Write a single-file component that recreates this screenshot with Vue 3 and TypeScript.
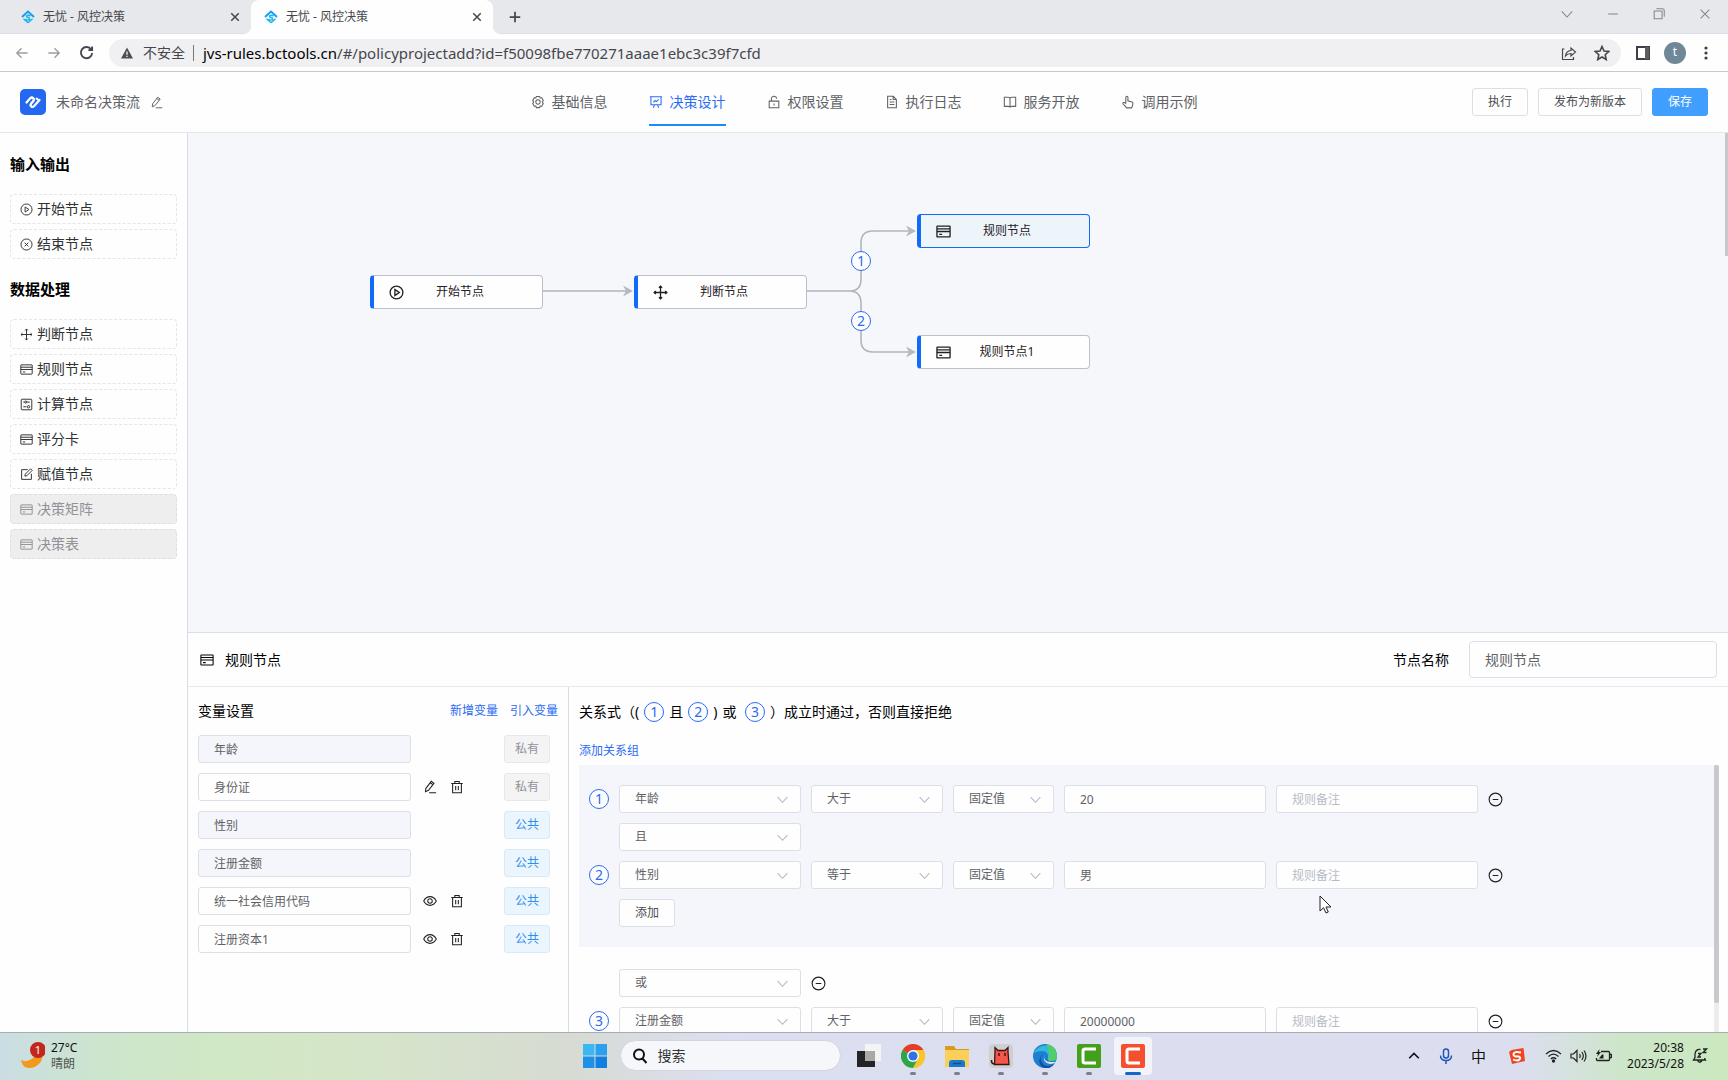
<script setup lang="ts">
import { h, ref } from 'vue'

type IconProps = { name: string; size?: number; weight?: number }

const paths: Record<string, string> = {
  gear: 'M6.2 1.6h3.6l.7 1.7 1.8-.2 1.8 3.1L13 7.7v.6l1.1 1.5-1.8 3.1-1.8-.2-.7 1.7H6.2l-.7-1.7-1.8.2-1.8-3.1L3 8.3v-.6L1.9 6.2l1.8-3.1 1.8.2zM8 5.500a2.500 2.500 0 1 0 0 5 2.500 2.500 0 0 0 0-5z',
  board: 'M1 2h14M2.200 2v9.200h11.600V2M5 14.800l1.200-3.500M11 14.800l-1.200-3.500M5 8.300l2-2 1.500 1.300L11 5',
  lock: 'M2.500 7h11v7.500h-11zM5 7V4.500a3 3 0 0 1 6-.2M8 9.700v2.300',
  doc: 'M3 1.500h6.500L13 5v9.500H3zM9.300 1.700v3.500h3.500M5.300 8h5.400M5.300 10.800h5.400M5.300 5.200h2',
  book: 'M1.500 2.500h4.500q2 0 2 1.500 0-1.500 2-1.500h4.500v10.500H10q-2 0-2 1.200 0-1.200-2-1.200H1.500zM8 4v10',
  hand: 'M5.500 9.800V2.700a1.200 1.200 0 0 1 2.400 0v4l4.600 1.200q1.300.4 1.100 1.800l-.6 3.300-1 1.700H6.500L2.300 10q-.5-1.200.7-1.500 1-.2 2.500 1.300',
  pencil: 'M3.300 9.500l6.200-8 3 2.200-6.200 8-3.500 1.600zM8.300 3.100l3 2.200M7 14.500h8',
  play: 'M8 1.200a6.800 6.800 0 1 0 0 13.600A6.800 6.800 0 0 0 8 1.200zM6.300 4.900v6.200L11 8z',
  stop: 'M8 1.200a6.800 6.800 0 1 0 0 13.600A6.800 6.800 0 0 0 8 1.200zM5.700 5.700l4.600 4.600M10.300 5.700l-4.600 4.600',
  move: 'M8 1.200v13.600M1.200 8h13.600M6.300 3L8 1.200 9.700 3M6.300 13L8 14.800 9.700 13M3 6.300L1.200 8 3 9.700M13 6.300L14.800 8 13 9.700',
  card: 'M1.500 2.300h13q.5 0 .5.5v10.400q0 .5-.5.5h-13q-.5 0-.5-.5V2.800q0-.5.5-.5zM1 5.200h14M1 8h14M3.500 11h3',
  calc: 'M2.500 1.500h11q1 0 1 1v11q0 1-1 1h-11q-1 0-1-1v-11q0-1 1-1zM4 5h1.500M7 3.700a1.300 1.300 0 1 0 0 2.600 1.300 1.300 0 0 0 0-2.600zM8.500 5H12M4 10.800h4M10.500 9.300a1.500 1.500 0 1 0 0 3 1.500 1.500 0 0 0 0-3z',
  assign: 'M9.500 2H2v12h12V7M6 10l.5-2.500L13 1l2 2-6.500 6.500z',
  trash: 'M1.500 4h13M5.500 4V1.700h5V4M3 4v10.500h10V4M6.500 6.800v5M9.500 6.800v5',
  eye: 'M.8 8Q3.500 3 8 3t7.200 5Q12.500 13 8 13T.8 8zM8 5.400a2.600 2.600 0 1 0 0 5.200 2.600 2.600 0 0 0 0-5.200z',
  minus: 'M8 1.200a6.800 6.800 0 1 0 0 13.600A6.800 6.800 0 0 0 8 1.200zM5 8h6',
  down: 'M2 5l6 6.500L14 5',
  up: 'M2.500 10.500L8 5l5.500 5.500',
  close: 'M3 3l10 10M13 3L3 13',
  plus: 'M8 2v12M2 8h12',
  dash: 'M2.500 8h11',
  restore: 'M2.500 4.500h9v9h-9zM5 2h7q2 0 2 2v7',
  back: 'M14.500 8H2M7.500 2.500L2 8l5.500 5.500',
  forward: 'M1.500 8H14M8.500 2.500L14 8l-5.500 5.500',
  reload: 'M13 4.800A6 6 0 1 0 14 8.500M14 1.500v4h-4',
  share: 'M3.500 4H1.500v10.500h11V12M4.500 11q.5-5 5.500-5.500V3l4.500 4-4.500 4V8.500q-3.500 0-5.500 2.500z',
  star: 'M8 1.500l2 4.500 4.700.5-3.500 3.200 1 4.800L8 12l-4.200 2.500 1-4.800L1.300 6.500 6 6z',
  search: 'M7 1.500a5 5 0 1 0 0 10 5 5 0 0 0 0-10zM10.500 10.500l4 4.500',
}

const Icon = (p: IconProps) =>
  h('svg', { width: p.size ?? 14, height: p.size ?? 14, viewBox: '0 0 16 16', fill: 'none', stroke: 'currentColor', 'stroke-width': p.weight ?? 1.2, 'aria-hidden': 'true' }, [
    h('path', { d: paths[p.name] }),
  ])
Icon.props = ['name', 'size', 'weight']

const browserTabs = [
  { title: '无忧 - 风控决策', active: false },
  { title: '无忧 - 风控决策', active: true },
]

const nav = [
  { icon: 'gear', label: '基础信息' },
  { icon: 'board', label: '决策设计', active: true },
  { icon: 'lock', label: '权限设置' },
  { icon: 'doc', label: '执行日志' },
  { icon: 'book', label: '服务开放' },
  { icon: 'hand', label: '调用示例' },
]

const palette = [
  { title: '输入输出', items: [{ icon: 'play', label: '开始节点' }, { icon: 'stop', label: '结束节点' }] },
  {
    title: '数据处理',
    items: [
      { icon: 'move', label: '判断节点' },
      { icon: 'card', label: '规则节点' },
      { icon: 'calc', label: '计算节点' },
      { icon: 'card', label: '评分卡' },
      { icon: 'assign', label: '赋值节点' },
      { icon: 'card', label: '决策矩阵', disabled: true },
      { icon: 'card', label: '决策表', disabled: true },
    ],
  },
]

const nodes = [
  { x: 182, y: 142, icon: 'play', label: '开始节点' },
  { x: 446, y: 142, icon: 'move', label: '判断节点' },
  { x: 729, y: 81, icon: 'card', label: '规则节点', selected: true },
  { x: 729, y: 202, icon: 'card', label: '规则节点1' },
]

const nodeName = ref('规则节点')

const variables = ref([
  { name: '年龄', locked: true, icons: [] as string[], shared: false },
  { name: '身份证', locked: false, icons: ['pencil', 'trash'], shared: false },
  { name: '性别', locked: true, icons: [], shared: true },
  { name: '注册金额', locked: true, icons: [], shared: true },
  { name: '统一社会信用代码', locked: false, icons: ['eye', 'trash'], shared: true },
  { name: '注册资本1', locked: false, icons: ['eye', 'trash'], shared: true },
])

type Row =
  | { kind: 'rule'; no: number; field: string; op: string; value: string }
  | { kind: 'join'; word: string; removable?: boolean }
  | { kind: 'add' }

const groups = ref<{ shaded: boolean; rows: Row[] }[]>([
  {
    shaded: true,
    rows: [
      { kind: 'rule', no: 1, field: '年龄', op: '大于', value: '20' },
      { kind: 'join', word: '且' },
      { kind: 'rule', no: 2, field: '性别', op: '等于', value: '男' },
      { kind: 'add' },
    ],
  },
  {
    shaded: false,
    rows: [
      { kind: 'join', word: '或', removable: true },
      { kind: 'rule', no: 3, field: '注册金额', op: '大于', value: '20000000' },
    ],
  },
])
</script>

<template>
  <div class="desktop">
    <div class="tabstrip">
      <div v-for="(t, i) in browserTabs" :key="i" class="tab" :class="{ active: t.active }">
        <svg width="14" height="14" viewBox="0 0 14 14" fill="none" stroke-width="2" aria-hidden="true">
          <path d="M1 7L7 1.500 13 7" stroke="#1d9bf0" />
          <path d="M9.500 6Q7 4.500 5.500 6q0 1.300 1.500 1.500 2 .3 1.500 2Q7 10.800 4.500 9M7 12.800L2.500 8.800M7 12.800l4.500-4" stroke="#19b5ee" stroke-width="1.500" />
        </svg>
        <span class="tab-title">{{ t.title }}</span>
        <button class="plain" aria-label="关闭标签页"><Icon name="close" :size="12" :weight="2" /></button>
      </div>
      <button class="plain new-tab" aria-label="新标签页"><Icon name="plus" :size="14" :weight="2" /></button>
      <div class="window-controls">
        <button class="plain" aria-label="搜索标签页"><Icon name="down" /></button>
        <button class="plain" aria-label="最小化"><Icon name="dash" /></button>
        <button class="plain" aria-label="还原"><Icon name="restore" /></button>
        <button class="plain" aria-label="关闭"><Icon name="close" /></button>
      </div>
    </div>

    <div class="toolbar">
      <button class="plain faded" aria-label="后退"><Icon name="back" :weight="1.500" /></button>
      <button class="plain faded" aria-label="前进"><Icon name="forward" :weight="1.500" /></button>
      <button class="plain" aria-label="重新加载"><Icon name="reload" :size="15" :weight="2" /></button>
      <div class="address">
        <svg width="12" height="12" viewBox="0 0 12 12" aria-hidden="true">
          <path d="M6 .5L12 11.500H0z" fill="#4b4e54" /><path d="M6 4.500v3.200M6 8.800V10" stroke="#fff" stroke-width="1.200" />
        </svg>
        <span class="insecure">不安全</span>
        <span class="url"><b>jvs-rules.bctools.cn</b>/#/policyprojectadd?id=f50098fbe770271aaae1ebc3c39f7cfd</span>
        <button class="plain" aria-label="分享"><Icon name="share" :size="16" /></button>
        <button class="plain" aria-label="收藏"><Icon name="star" :size="16" :weight="1.600" /></button>
      </div>
      <div class="browser-actions">
        <button class="plain" aria-label="侧边栏">
          <svg width="14" height="14" viewBox="0 0 14 14"><path d="M1 1h12v12H1z" fill="none" stroke="#3f4047" stroke-width="2" /><path d="M9 1h4v12H9z" fill="#5b5c64" /></svg>
        </button>
        <button class="avatar">t</button>
        <button class="plain" aria-label="菜单">
          <svg width="4" height="14" viewBox="0 0 4 14" fill="#3c4043"><circle cx="2" cy="2" r="1.600" /><circle cx="2" cy="7" r="1.600" /><circle cx="2" cy="12" r="1.600" /></svg>
        </button>
      </div>
    </div>

    <header class="app-header">
      <div class="project">
        <svg width="26" height="26" viewBox="0 0 26 26" fill="none" aria-hidden="true">
          <rect width="26" height="26" rx="5" fill="#2468f2" />
          <path d="M6.500 13.500l3.500-4q1.800-1.800 3.300-.3 1.200 1.300 0 2.800l-2.300 2.800q-1 1.500.3 2.700 1.400 1 2.900-.5l5.300-6" stroke="#fff" stroke-width="2.300" stroke-linecap="round" />
          <path d="M16.500 9.500l2.500 2" stroke="#fff" stroke-width="2" stroke-linecap="round" />
        </svg>
        <span>未命名决策流</span>
        <button class="plain" aria-label="重命名"><Icon name="pencil" :size="13" /></button>
      </div>
      <nav>
        <a v-for="n in nav" :key="n.label" href="#" :class="{ active: n.active }">
          <Icon :name="n.icon" :size="14" /><span>{{ n.label }}</span>
        </a>
      </nav>
      <div class="header-actions">
        <button class="btn">执行</button>
        <button class="btn">发布为新版本</button>
        <button class="btn primary">保存</button>
      </div>
    </header>

    <div class="workspace">
      <aside class="sidebar">
        <section v-for="g in palette" :key="g.title">
          <h3>{{ g.title }}</h3>
          <button v-for="it in g.items" :key="it.label" class="palette-item" :disabled="it.disabled">
            <Icon :name="it.icon" :size="13" /><span>{{ it.label }}</span>
          </button>
        </section>
      </aside>

      <main>
        <div class="canvas">
          <svg class="edges" width="920" height="300" viewBox="0 0 920 300" fill="none" stroke="#b0b5bf" stroke-width="1.600" aria-hidden="true">
            <path d="M355 158H438M619 158h43q11 0 11-12v-36q0-12 12-12h36M661 158q12 0 12 12v37q0 12 12 12h36" />
            <g fill="#b4bac3" stroke="none">
              <path d="M435 152.500l10 5.500-10 5.500 3-5.500z" /><path d="M718 92.500l10 5.500-10 5.500 3-5.500z" /><path d="M718 213.500l10 5.500-10 5.500 3-5.500z" />
            </g>
          </svg>
          <div v-for="n in nodes" :key="n.label" class="node" :class="{ selected: n.selected }" :style="{ left: n.x + 'px', top: n.y + 'px' }">
            <Icon :name="n.icon" :size="15" :weight="1.400" /><span>{{ n.label }}</span>
          </div>
          <span class="num edge-one">1</span>
          <span class="num edge-two">2</span>
          <i class="canvas-thumb"></i>
        </div>

        <section class="panel">
          <div class="panel-head">
            <Icon name="card" :size="14" />
            <h4>规则节点</h4>
            <label for="node-name">节点名称</label>
            <input id="node-name" v-model="nodeName" type="text" />
          </div>
          <div class="panel-body">
            <div class="variables">
              <div class="variables-head">
                <h4>变量设置</h4>
                <a href="#">新增变量</a>
                <a href="#">引入变量</a>
              </div>
              <div v-for="v in variables" :key="v.name" class="variable">
                <input v-model="v.name" class="field" type="text" aria-label="变量名称" :disabled="v.locked" />
                <div class="variable-icons">
                  <button v-for="ic in v.icons" :key="ic" class="plain" :aria-label="ic"><Icon :name="ic" :size="14" /></button>
                </div>
                <span class="tag" :class="{ shared: v.shared }">{{ v.shared ? '公共' : '私有' }}</span>
              </div>
            </div>

            <div class="rules">
              <div class="formula">
                <span>关系式（(</span><i class="num">1</i><span>且</span><i class="num">2</i><span>)</span><span>或&nbsp;</span><i class="num">3</i><span>）成立时通过，否则直接拒绝</span>
              </div>
              <a class="add-group" href="#">添加关系组</a>
              <div class="scroll">
                <div class="groups">
                  <div v-for="(g, gi) in groups" :key="gi" class="group" :class="{ shaded: g.shaded }">
                    <div v-for="(r, ri) in g.rows" :key="ri" class="row">
                      <template v-if="r.kind === 'rule'">
                        <span class="num">{{ r.no }}</span>
                        <div class="select wide"><select aria-label="变量"><option>{{ r.field }}</option></select><Icon name="down" :size="13" :weight="1.300" /></div>
                        <div class="select medium"><select aria-label="运算符"><option>{{ r.op }}</option></select><Icon name="down" :size="13" :weight="1.300" /></div>
                        <div class="select small"><select aria-label="取值方式"><option>固定值</option></select><Icon name="down" :size="13" :weight="1.300" /></div>
                        <input v-model="r.value" class="field" type="text" aria-label="值" />
                        <input class="field" type="text" aria-label="规则备注" placeholder="规则备注" />
                        <button class="plain" aria-label="删除"><Icon name="minus" :size="15" /></button>
                      </template>
                      <template v-else-if="r.kind === 'join'">
                        <div class="select wide indent"><select aria-label="关系"><option>{{ r.word }}</option></select><Icon name="down" :size="13" :weight="1.300" /></div>
                        <button v-if="r.removable" class="plain" aria-label="删除"><Icon name="minus" :size="15" /></button>
                      </template>
                      <button v-else class="btn indent">添加</button>
                    </div>
                  </div>
                </div>
                <div class="track"><i></i></div>
              </div>
            </div>
          </div>
        </section>
      </main>
    </div>

    <footer class="taskbar">
      <div class="weather">
        <svg width="24" height="30" viewBox="0 0 24 30" aria-hidden="true">
          <path d="M0 19q6 3 12-2 4-4 3-9l5 0q4 9-2 15Q11 29 4 26 1 24 0 19z" fill="#f39a1e" />
          <circle cx="17" cy="9" r="8" fill="#c4261d" />
          <text x="17" y="13" text-anchor="middle" font-size="11" fill="#fff">1</text>
        </svg>
        <div><div>27°C</div><div class="sky">晴朗</div></div>
      </div>
      <div class="dock">
        <button class="plain" aria-label="开始">
          <svg width="24" height="24" viewBox="0 0 24 24"><path d="M0 0h11.500v11.500H0z" fill="#3bb8f3" /><path d="M12.500 0H24v11.500H12.500z" fill="#2aa0ee" /><path d="M0 12.500h11.500V24H0z" fill="#1e90e6" /><path d="M12.500 12.500H24V24H12.500z" fill="#0f7fe0" /></svg>
        </button>
        <label class="search"><Icon name="search" :size="16" :weight="2" /><input type="text" placeholder="搜索" aria-label="搜索" /></label>
        <div class="apps">
          <button class="plain" aria-label="任务视图">
            <svg width="24" height="24" viewBox="0 0 24 24"><path d="M8 0h16v17H8z" fill="#f4f4f4" /><path d="M0 7h18v16H0z" fill="#242424" /><path d="M8 7h10v10H8z" fill="#a9a9a9" /></svg>
          </button>
          <button class="plain running" aria-label="Chrome">
            <svg width="24" height="24" viewBox="0 0 24 24"><circle cx="12" cy="12" r="12" fill="#f9c52a" /><path d="M12 12L1.600 6A12 12 0 0 1 22.400 6z" fill="#e33b2e" /><path d="M12 12L1.600 6A12 12 0 0 0 12 24l5-9z" fill="#2da44e" /><path d="M12 6h10.400A12 12 0 0 1 12 24l5.200-9z" fill="#f9c52a" /><circle cx="12" cy="12" r="6" fill="#fff" /><circle cx="12" cy="12" r="4.600" fill="#2a73e8" /></svg>
          </button>
          <button class="plain running" aria-label="文件资源管理器">
            <svg width="24" height="24" viewBox="0 0 24 24"><path d="M0 2h9l2 3h13v6H0z" fill="#d99a22" /><path d="M0 6h24v17H0z" fill="#fbd05a" /><path d="M4 23v-4q0-3 3-3h10q3 0 3 3v4z" fill="#1c78cf" /><path d="M8 19.500h8" stroke="#0e4f94" stroke-width="1.500" /></svg>
          </button>
          <button class="plain running" aria-label="红猫">
            <svg width="24" height="24" viewBox="0 0 24 24"><rect width="24" height="24" rx="4" fill="#cfcfcf" /><path d="M5.500 20.500L6 8V3.500L9 6.500h7l3-3V8l1 12.500z" fill="#f4564c" stroke="#3a1515" stroke-width="1.300" /><path d="M6 20q-4 0-3.500-4" fill="none" stroke="#3a1515" stroke-width="1.600" /><path d="M10 9v3M16 9v3" stroke="#3a1515" stroke-width="1.500" /></svg>
          </button>
          <button class="plain running" aria-label="Edge">
            <svg width="24" height="24" viewBox="0 0 24 24"><circle cx="12" cy="12" r="12" fill="#1c7fd3" /><path d="M1 9A12 12 0 0 1 24 12q0 5-5 5-5 0-4-3 1-6-5-7-6 0-9 2z" fill="#35b8dc" /><path d="M13 0q10 1 11 12 0 5-5 5-4 0-4-2 3-6-2-15z" fill="#52ce68" /><path d="M10 10q-5 6 1 11 6 3 11-2-5 8-13 4-6-6 1-13z" fill="#124f9c" /><path d="M11.500 11q-2 7 6.500 7h5q-2 2-6 2-8-1-5.500-9z" fill="#dfe4f2" /></svg>
          </button>
          <button class="plain running" aria-label="Camtasia">
            <svg width="24" height="24" viewBox="0 0 24 24"><rect width="24" height="24" rx="2" fill="#43a01c" /><path d="M19 5H8q-2 0-2 2v10q0 2 2 2h11" fill="none" stroke="#fff" stroke-width="3" /></svg>
          </button>
          <button class="plain current" aria-label="录制">
            <svg width="24" height="24" viewBox="0 0 24 24"><rect width="24" height="24" rx="2" fill="#f4502f" /><path d="M19 5H8q-2 0-2 2v10q0 2 2 2h11" fill="none" stroke="#fff" stroke-width="3" /></svg>
          </button>
        </div>
      </div>
      <div class="tray">
        <button class="plain" aria-label="显示隐藏的图标"><Icon name="up" :size="14" :weight="1.800" /></button>
        <svg width="14" height="16" viewBox="0 0 14 16" fill="none" stroke="#2058b5" stroke-width="1.500"><rect x="4.500" y="1" width="5" height="9" rx="2.500" /><path d="M1.500 7.500q0 5 5.500 5t5.500-5M7 12.500V16" /></svg>
        <span class="ime">中</span>
        <svg class="sogou" width="16" height="16" viewBox="0 0 16 16"><path d="M2.500 2L14.500 0l1.500 13-13 3L0 4z" fill="#f0441f" /><path d="M12 4.500Q5 3 4.500 6t5 2.500q3 1 1 3t-6.500 0" fill="none" stroke="#fff" stroke-width="1.900" /></svg>
        <div class="status">
          <svg width="17" height="14" viewBox="0 0 17 14" fill="none" stroke="#222" stroke-width="1.300"><path d="M1 5q7.500-7 15 0M3.500 7.500q5-4.800 10 0M5.800 10q2.700-2.500 5.400 0" /><circle cx="8.500" cy="12" r="1" fill="#222" /></svg>
          <svg width="17" height="14" viewBox="0 0 17 14" fill="none" stroke="#222" stroke-width="1.200"><path d="M1 5v4h2.500L7 12.500v-11L3.500 5zM9.500 5q1.500 2 0 4M11.800 3q3 4 0 8M14 1.500q4 5.500 0 11" /></svg>
          <svg width="17" height="14" viewBox="0 0 17 14" fill="none" stroke="#222" stroke-width="1.300"><path d="M6 2.500h7.500q1 0 1 1v7q0 1-1 1h-11q-1 0-1-1V9M15 5.500h1.500v3H15" /><path d="M5 8l2-2.500h1.500v4H4z" fill="#222" stroke="none" /><path d="M4.500 0L1 5h2L2 8l4-5H4z" fill="#222" stroke="none" /></svg>
        </div>
        <div class="clock"><div>20:38</div><div>2023/5/28</div></div>
        <svg width="16" height="16" viewBox="0 0 16 16" fill="none" stroke="#222" stroke-width="1.300"><path d="M8.500 1.500Q3.500 1 3 6v3.500L1.500 12h12L12.500 10M5.500 12.500q2 3.500 4.500 0M6 5.500h3l-3 3.500h3M11 1h3.500L11 4.500h3.500" /></svg>
      </div>
    </footer>

    <svg class="cursor" width="13" height="19" viewBox="0 0 13 19" aria-hidden="true">
      <path d="M1 1v15l3.500-3.300L7 18l2.300-1L7 12h5z" fill="#fff" stroke="#222" />
    </svg>
  </div>
</template>

<style>
body {
  margin: 0;
}
</style>

<style scoped>
* {
  box-sizing: border-box;
}
.desktop {
  position: relative;
  display: flex;
  flex-direction: column;
  height: 100vh;
  overflow: hidden;
  background: #fefefe;
  color: #1f2024;
  font-family: "Noto Sans", "Noto Sans CJK SC", sans-serif;
  font-size: 14px;
  line-height: 20px;
}
svg {
  display: block;
  flex: none;
}
button,
input,
select {
  font: inherit;
  color: inherit;
}
a {
  color: #2b6bf3;
  text-decoration: none;
}
h3,
h4 {
  margin: 0;
  font-weight: 400;
}
i {
  font-style: normal;
}
.plain {
  display: flex;
  align-items: center;
  justify-content: center;
  padding: 0;
  border: 0;
  background: none;
}

/* browser chrome */
.tabstrip {
  display: flex;
  flex: none;
  height: 34px;
  background: #e7e8ec;
  color: #45474d;
  font-size: 12px;
  border-bottom: 1px solid #dcdfea;
}
.tab {
  position: relative;
  display: flex;
  align-items: center;
  gap: 8px;
  width: 242px;
  height: 34px;
  padding: 0 10px 0 13px;
}
.tab:first-child {
  width: 251px;
  padding: 0 10px 0 21px;
}
.tab.active {
  background: #fefefe;
  border-radius: 8px 8px 0 0;
}
.tab.active::before,
.tab.active::after {
  content: "";
  position: absolute;
  bottom: 0;
  width: 8px;
  height: 8px;
}
.tab.active::before {
  left: -8px;
  background: radial-gradient(circle at 0 0, transparent 8px, #fefefe 8px);
}
.tab.active::after {
  right: -8px;
  background: radial-gradient(circle at 100% 0, transparent 8px, #fefefe 8px);
}
.tab-title {
  flex: 1;
}
.new-tab {
  margin-left: 15px;
}
.window-controls {
  display: flex;
  gap: 32px;
  height: 28px;
  margin-left: auto;
  padding-right: 16px;
  color: #85868c;
}
.toolbar {
  display: flex;
  flex: none;
  align-items: center;
  height: 38px;
  padding-left: 15px;
  color: #45474d;
  border-bottom: 1px solid #c5c8d0;
}
.toolbar > .plain {
  margin-right: 18px;
}
.faded {
  color: #9b9da3;
}
.address {
  display: flex;
  flex: 1;
  align-items: center;
  height: 28px;
  margin-left: -3px;
  padding: 0 11px 0 12px;
  border-radius: 14px;
  background: #f0f0f3;
}
.insecure {
  margin-left: 10px;
  padding-right: 8px;
  line-height: 16px;
  border-right: 1px solid #777;
}
.url {
  flex: 1;
  margin-left: 9px;
  font-size: 15px;
}
.url b {
  font-weight: 400;
  color: #000;
}
.address .plain + .plain {
  margin-left: 17px;
}
.browser-actions {
  display: flex;
  align-items: center;
  gap: 21px;
  padding: 0 20px 0 15px;
}
.avatar {
  width: 22px;
  height: 22px;
  margin: 0 -3px 0 -7px;
  padding: 0 0 2px;
  border: 0;
  border-radius: 50%;
  background: #6f8797;
  color: #fff;
  font-size: 12px;
  line-height: 20px;
}

/* application header */
.app-header {
  display: grid;
  flex: none;
  grid-template-columns: 1fr auto 1fr;
  align-items: center;
  height: 61px;
  padding: 0 20px;
  color: #606266;
  border-bottom: 1px solid #e4e6ec;
}
.project {
  display: flex;
  align-items: center;
  gap: 10px;
}
nav {
  display: flex;
  gap: 41px;
}
nav a {
  display: flex;
  align-items: center;
  gap: 7px;
  height: 48px;
  color: #606266;
  border-top: 2px solid transparent;
  border-bottom: 2px solid transparent;
}
nav a.active {
  color: #2b6bf3;
  border-bottom-color: #1b8bfa;
}
.header-actions {
  display: flex;
  justify-content: flex-end;
  gap: 10px;
}
.btn {
  height: 28px;
  padding: 0 15px;
  border: 1px solid #dcdfe6;
  border-radius: 3px;
  background: #fefefe;
  color: #4b4d52;
  font-size: 12px;
  line-height: 20px;
}
.btn.primary {
  border-color: #409eff;
  background: #409eff;
  color: #fff;
}

/* node palette */
.workspace {
  display: flex;
  flex: 1;
  min-height: 0;
}
.sidebar {
  display: flex;
  flex: none;
  flex-direction: column;
  gap: 20px;
  width: 188px;
  padding: 21px 10px 0;
  border-right: 1px solid #dadde5;
}
.sidebar section {
  display: flex;
  flex-direction: column;
  gap: 5px;
}
.sidebar h3 {
  margin-bottom: 15px;
  color: #000;
  font-size: 15px;
  font-weight: 700;
}
.palette-item {
  display: flex;
  align-items: center;
  gap: 4px;
  height: 30px;
  padding: 0 9px;
  border: 1px dashed #e3e5ea;
  border-radius: 4px;
  background: #fefefe;
  color: #303236;
}
.palette-item:disabled {
  border-color: #dfdfe0;
  background: #eeeeef;
  color: #919296;
}

/* flow canvas */
main {
  display: flex;
  flex: 1;
  flex-direction: column;
  min-width: 0;
}
.canvas {
  position: relative;
  flex: 1;
  min-height: 0;
  background: #f6f7fa;
}
.edges {
  position: absolute;
  top: 0;
  left: 0;
}
.node {
  position: absolute;
  display: flex;
  align-items: center;
  width: 173px;
  height: 34px;
  padding: 0 26px 0 15px;
  border: 1px solid #bcc0c8;
  border-left: 4px solid #0f6bf8;
  border-radius: 4px;
  background: #fefefe;
  font-size: 12px;
}
.node span {
  flex: 1;
  text-align: center;
}
.node.selected {
  border-color: #0f6bf8;
  background: #edf5fb;
}
.num {
  display: inline-flex;
  flex: none;
  align-items: center;
  justify-content: center;
  width: 20px;
  height: 20px;
  border: 1px solid #2b6bf3;
  border-radius: 50%;
  background: #fefefe;
  color: #2b6bf3;
  line-height: 18px;
}
.edge-one,
.edge-two {
  position: absolute;
  left: 663px;
  top: 118px;
}
.edge-two {
  top: 178px;
}
.canvas-thumb {
  position: absolute;
  top: 0;
  right: 0;
  width: 3px;
  height: 123px;
  background: #c6c8cc;
}

/* node settings */
.panel {
  display: flex;
  flex: none;
  flex-direction: column;
  height: 400px;
  border-top: 1px solid #dadfe9;
}
.panel-head {
  display: flex;
  flex: none;
  align-items: center;
  height: 54px;
  padding: 0 11px 0 12px;
  color: #000;
  border-bottom: 1px solid #e4e8f1;
}
.panel-head h4 {
  flex: 1;
  margin-left: 11px;
}
.panel-head label {
  margin-right: 20px;
}
.panel-head input {
  width: 248px;
  height: 37px;
  padding: 0 15px 2px;
  border: 1px solid #dcdfe6;
  border-radius: 4px;
  background: #fefefe;
  color: #606266;
}
.panel-body {
  display: flex;
  flex: 1;
  min-height: 0;
}
.variables {
  display: flex;
  flex: none;
  flex-direction: column;
  gap: 10px;
  width: 381px;
  padding: 14px 10px 0;
  border-right: 1px solid #dadde5;
}
.variables-head {
  display: flex;
  align-items: center;
  gap: 12px;
  margin-bottom: 4px;
  font-size: 12px;
}
.variables-head h4 {
  flex: 1;
  color: #000;
  font-size: 14px;
}
.variable {
  display: flex;
  align-items: center;
  height: 28px;
  padding-right: 8px;
}
.field {
  height: 28px;
  padding: 0 15px;
  border: 1px solid #dcdfe6;
  border-radius: 3px;
  background: #fefefe;
  color: #606266;
  font-size: 12px;
}
.field:disabled {
  background: #f5f6fb;
}
.field::placeholder {
  color: #b7bbc6;
  opacity: 1;
}
.variable .field {
  width: 213px;
}
.variable-icons {
  display: flex;
  flex: 1;
  gap: 13px;
  padding-left: 12px;
  color: #1f2024;
}
.tag {
  width: 46px;
  height: 28px;
  border: 1px solid #e6e7ea;
  border-radius: 3px;
  background: #f4f4f5;
  color: #909399;
  font-size: 12px;
  line-height: 26px;
  text-align: center;
}
.tag.shared {
  border-color: #d6eafa;
  background: #ebf5fd;
  color: #2f8ff0;
}
.rules {
  display: flex;
  flex: 1;
  flex-direction: column;
  min-width: 0;
  padding: 14px 9px 0 10px;
}
.formula {
  display: flex;
  align-items: center;
  gap: 5px;
  height: 22px;
  color: #000;
}
.add-group {
  align-self: flex-start;
  margin: 18px 0 4px;
  font-size: 12px;
}
.scroll {
  display: flex;
  flex: 1;
  min-height: 0;
  overflow: hidden;
}
.groups {
  display: flex;
  flex: 1;
  flex-direction: column;
  gap: 2px;
}
.group {
  display: flex;
  flex-direction: column;
  gap: 10px;
  padding: 20px 10px;
}
.group.shaded {
  background: #f5f6fb;
}
.row {
  display: flex;
  align-items: center;
  gap: 10px;
  height: 28px;
}
.row .field {
  width: 202px;
}
.indent {
  margin-left: 30px;
}
.select {
  position: relative;
  flex: none;
}
.select select {
  width: 100%;
  height: 28px;
  padding: 0 15px;
  border: 1px solid #dcdfe6;
  border-radius: 3px;
  background: #fefefe;
  color: #606266;
  font-size: 12px;
  appearance: none;
}
.select svg {
  position: absolute;
  top: 8px;
  right: 12px;
  color: #b3b8c6;
  pointer-events: none;
}
.wide {
  width: 182px;
}
.medium {
  width: 132px;
}
.small {
  width: 101px;
}
.track {
  flex: none;
  width: 5px;
  background: #ededee;
}
.track i {
  display: block;
  height: 238px;
  border-radius: 2px;
  background: #c8c9cc;
}

/* taskbar */
.taskbar {
  position: relative;
  display: grid;
  flex: none;
  grid-template-columns: 1fr auto 1fr;
  align-items: center;
  height: 48px;
  padding-bottom: 2px;
  color: #111;
  font-size: 12px;
  line-height: 16px;
  border-top: 1px solid #a9adb3;
  background: linear-gradient(90deg, #cbdde4 0%, #cde5cc 6%, #d1e8c4 13%, #d5e6c8 20%, #d7dbd3 33%, #dcdff0 42%, #dcdef0 88%, #cde6c9 94%, #cbe8bf 100%);
}
.weather {
  display: flex;
  align-items: center;
  gap: 6px;
  padding-left: 21px;
}
.sky {
  color: #4d5550;
}
.dock {
  display: flex;
  align-items: center;
  gap: 13px;
  padding-left: 6px;
}
.search {
  display: flex;
  align-items: center;
  gap: 10px;
  width: 221px;
  height: 31px;
  padding: 0 11px;
  border: 1px solid #d2d5de;
  border-radius: 16px;
  background: #f6f7fb;
}
.search input {
  width: 100%;
  padding: 0;
  border: 0;
  outline: 0;
  background: none;
  font-size: 14px;
}
.search input::placeholder {
  color: #333;
  opacity: 1;
}
.apps {
  display: flex;
  gap: 6px;
  margin-left: -4px;
}
.apps .plain {
  position: relative;
  width: 38px;
  height: 38px;
  border-radius: 4px;
}
.apps .current {
  background: #f3f4fa;
}
.apps .running::after,
.apps .current::after {
  content: "";
  position: absolute;
  bottom: 0;
  width: 6px;
  height: 3px;
  border-radius: 2px;
  background: #7d7f86;
}
.apps .current::after {
  width: 16px;
  background: #1267c9;
}
.tray {
  display: flex;
  align-items: center;
  justify-content: flex-end;
  gap: 18px;
  padding-right: 20px;
}
.ime {
  font-size: 15px;
}
.sogou {
  margin-left: 5px;
}
.status {
  display: flex;
  gap: 8px;
  margin-left: 2px;
}
.clock {
  margin-left: -3px;
  text-align: right;
}
.clock + svg {
  margin-left: -10px;
}
.cursor {
  position: absolute;
  left: 1319px;
  top: 895px;
}
</style>
